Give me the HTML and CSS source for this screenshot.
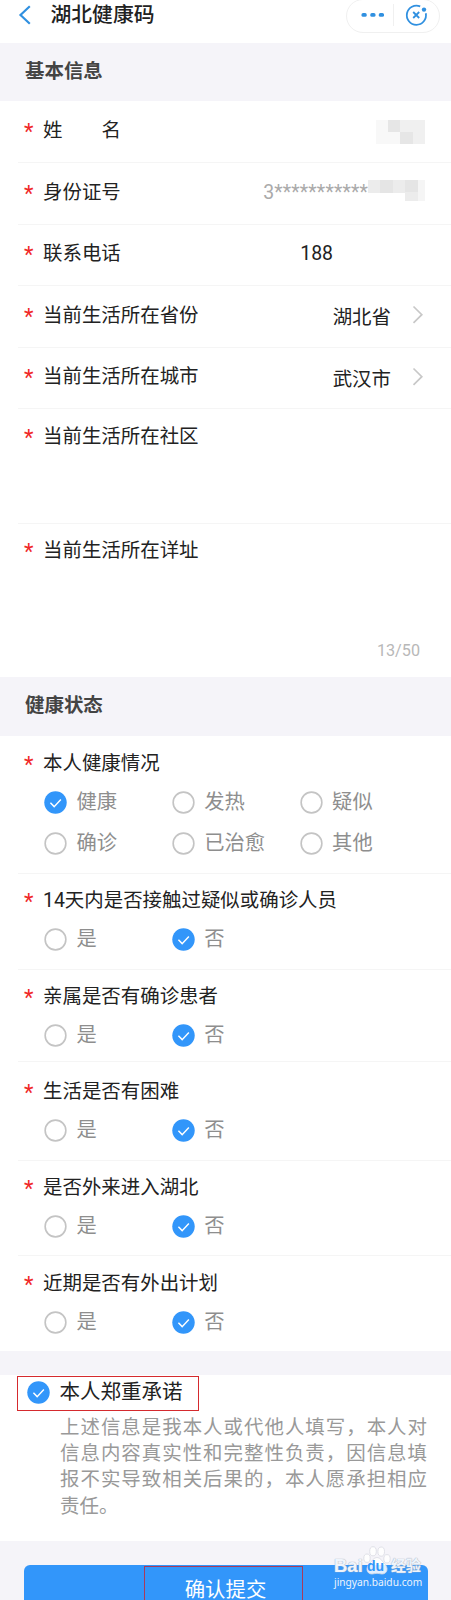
FILE: index.html
```html
<!DOCTYPE html>
<html lang="zh-CN">

<head>
    <meta charset="utf-8">
    <title>湖北健康码</title>
    <link rel="stylesheet" href="styles.css">
</head>

<body>
    <svg class="defs">
        <symbol id="off" viewBox="0 0 24 24">
            <circle cx="12" cy="12" r="10.8" fill="#fff" stroke="#c4c4c4" stroke-width="1.7" />
        </symbol>
        <symbol id="on" viewBox="0 0 24 24">
            <circle cx="12" cy="12" r="11.7" fill="#3296fa" />
            <path d="M6.7 12.3l3.9 4 7-7.4" fill="none" stroke="#fff" stroke-width="1.5" />
        </symbol>
        <symbol id="arrow" viewBox="0 0 12 20">
            <path d="M1.5 1.5l8.3 8.2-8.3 8.2" fill="none" stroke="#c8c8c8" stroke-width="1.7" />
        </symbol>
    </svg>

    <div class="header">
        <svg class="back" width="14" height="22" viewBox="0 0 14 22">
            <path d="M11.8 2.2L2.5 11l9.3 8.8" fill="none" stroke="#3090e0" stroke-width="2.2" />
        </svg>
        <h1>湖北健康码</h1>
        <div class="capsule">
            <svg width="94" height="34" viewBox="0 0 94 34">
                <g fill="#3090e0">
                    <rect x="15.5" y="14" width="5.2" height="3.8" rx="1.6" />
                    <rect x="24.3" y="14" width="5.2" height="3.8" rx="1.6" />
                    <rect x="32.8" y="14" width="5.2" height="3.8" rx="1.6" />
                    <circle cx="78" cy="10.6" r="2.2" />
                </g>
                <path d="M47.5 5v22" stroke="#f0f0f0" />
                <path d="M74.2 7.4A9.6 9.6 0 1 0 79.8 14.3M67.2 13l6 6M73.2 13l-6 6" fill="none" stroke="#3090e0" stroke-width="1.8" />
            </svg>
        </div>
    </div>

    <h2 class="section">基本信息</h2>
    <div class="form">
        <div class="row name">
            <i>*</i><label>姓<span class="space"></span>名</label>
            <div class="mosaic">
                <b class="m1"></b><b class="m3"></b><b class="m2"></b><b class="m2"></b>
                <b class="m1"></b><b class="m1"></b><b class="m3"></b><b class="m2"></b>
            </div>
        </div>
        <div class="row idcard">
            <i>*</i><label>身份证号</label>
            <span class="value gray">3<span class="stars">***********</span></span>
            <svg class="idmask" width="57" height="22" viewBox="0 0 57 22">
                <path d="M0 0h50v21H37v-8H0z" fill="#ececec" />
                <path d="M12 0h13v13H12zM37 0h13v12H37z" fill="#e5e5e5" />
                <path d="M50 0h7v21h-7z" fill="#f5f5f5" />
            </svg>
        </div>
        <div class="row phone">
            <i>*</i><label>联系电话</label>
            <span class="value num">188</span>
        </div>
        <div class="row province">
            <i>*</i><label>当前生活所在省份</label>
            <span class="value">湖北省</span>
            <svg class="arrow"><use href="#arrow" /></svg>
        </div>
        <div class="row city">
            <i>*</i><label>当前生活所在城市</label>
            <span class="value">武汉市</span>
            <svg class="arrow"><use href="#arrow" /></svg>
        </div>
        <div class="row community">
            <i>*</i><label>当前生活所在社区</label>
        </div>
        <div class="row address">
            <i>*</i><label>当前生活所在详址</label>
            <span class="count">13/50</span>
        </div>
    </div>

    <h2 class="section health">健康状态</h2>
    <div class="form">
        <div class="question q1">
            <div class="title"><i>*</i><label>本人健康情况</label></div>
            <div class="options">
                <span><svg><use href="#on" /></svg>健康</span>
                <span><svg><use href="#off" /></svg>发热</span>
                <span><svg><use href="#off" /></svg>疑似</span>
                <span><svg><use href="#off" /></svg>确诊</span>
                <span><svg><use href="#off" /></svg>已治愈</span>
                <span><svg><use href="#off" /></svg>其他</span>
            </div>
        </div>
        <div class="question q2">
            <div class="title"><i>*</i><label>14天内是否接触过疑似或确诊人员</label></div>
            <div class="options">
                <span><svg><use href="#off" /></svg>是</span>
                <span><svg><use href="#on" /></svg>否</span>
            </div>
        </div>
        <div class="question q3">
            <div class="title"><i>*</i><label>亲属是否有确诊患者</label></div>
            <div class="options">
                <span><svg><use href="#off" /></svg>是</span>
                <span><svg><use href="#on" /></svg>否</span>
            </div>
        </div>
        <div class="question q4">
            <div class="title"><i>*</i><label>生活是否有困难</label></div>
            <div class="options">
                <span><svg><use href="#off" /></svg>是</span>
                <span><svg><use href="#on" /></svg>否</span>
            </div>
        </div>
        <div class="question q5">
            <div class="title"><i>*</i><label>是否外来进入湖北</label></div>
            <div class="options">
                <span><svg><use href="#off" /></svg>是</span>
                <span><svg><use href="#on" /></svg>否</span>
            </div>
        </div>
        <div class="question q6">
            <div class="title"><i>*</i><label>近期是否有外出计划</label></div>
            <div class="options">
                <span><svg><use href="#off" /></svg>是</span>
                <span><svg><use href="#on" /></svg>否</span>
            </div>
        </div>
    </div>

    <div class="promise">
        <div class="agree"><svg><use href="#on" /></svg><span>本人郑重承诺</span></div>
        <p>上述信息是我本人或代他人填写，本人对信息内容真实性和完整性负责，因信息填报不实导致相关后果的，本人愿承担相应责任。</p>
    </div>

    <div class="footer">
        <div class="submit"><span>确认提交</span></div>
        <div class="watermark">
            <svg class="paw" width="28" height="30" viewBox="0 0 28 30">
                <g fill="#fff" fill-opacity=".85" stroke="#d9dbe2" stroke-width=".8">
                    <ellipse cx="10" cy="5.3" rx="3.3" ry="4.6" />
                    <ellipse cx="18.2" cy="5.6" rx="3.3" ry="4.6" />
                    <ellipse cx="4" cy="12.2" rx="3.2" ry="4.2" />
                    <ellipse cx="24" cy="12.8" rx="3.2" ry="4.2" />
                    <path d="M14 11.5c3.5 0 4.5 3.2 7 5.5 5 4.6 3.5 11-2 11-2 0-3-.7-5-.7s-3 .7-5 .7c-5.5 0-7-6.4-2-11 2.5-2.3 3.5-5.5 7-5.5z" />
                </g>
            </svg>
            <div class="brand"><span class="bai">Bai</span><span class="du">du</span><span class="jy">经验</span></div>
            <div class="site">jingyan.baidu.com</div>
        </div>
    </div>
</body>

</html>
```
FILE: styles.css
```css
* {
    box-sizing: border-box;
}

body {
    margin: 0;
    width: 451px;
    height: 1600px;
    overflow: hidden;
    background-color: #fff;
    color: #222;
    font-family: Roboto, "Noto Sans CJK SC", sans-serif;
    font-size: 19.45px;
    line-height: 28px;
}

.defs {
    display: none;
}

.header {
    display: flex;
    height: 43px;
    padding-left: 18px;
}

.back {
    margin-top: 4px;
}

h1 {
    margin: 0 0 0 18.5px;
    padding-top: 1px;
    font-size: 20.8px;
    font-weight: 500;
    color: #222;
}

.capsule {
    width: 94px;
    height: 34px;
    margin: -1px 11px 0 auto;
    border: 1px solid #f0f0f0;
    border-radius: 17px;
}

.capsule svg {
    display: block;
    margin: -1px;
}

.section {
    height: 58px;
    margin: 0;
    padding: 15px 0 0 25px;
    background-color: #f5f4f9;
    font-size: 19.45px;
    font-weight: 700;
    color: #444;
}

.health {
    height: 59px;
}

i {
    width: 19px;
    padding-top: 1px;
    font-size: 22px;
    font-style: normal;
    color: #f02828;
}

.row {
    display: flex;
    height: 62px;
    margin-left: 18px;
    padding: 16px 26px 0 6px;
    border-bottom: 1px solid #f5f5f5;
}

.name .space {
    display: inline-block;
    width: 39px;
}

.mosaic {
    display: grid;
    grid-template-columns: repeat(4, 12.3px);
    grid-template-rows: 12px 12px;
    margin: 3px 0 0 auto;
}

.m1 {
    background-color: #f8f8f8;
}

.m2 {
    background-color: #f0f0f0;
}

.m3 {
    background-color: #e6e6e6;
}

.idmask {
    margin-top: 1px;
}

.value {
    margin-left: auto;
}

.gray {
    color: #aaa;
}

.stars {
    letter-spacing: .15px;
}

.phone {
    height: 61px;
    padding-top: 15px;
}

.num {
    margin-right: 92px;
}

.province .value,
.city .value {
    padding-top: 2px;
    margin-right: 21px;
}

.arrow {
    width: 12px;
    height: 20px;
    margin: 3px 1px 0 0;
}

.city {
    height: 61px;
    padding-top: 15px;
}

.city .value {
    padding-top: 3px;
}

.city .arrow {
    margin-top: 4px;
}

.community {
    height: 115px;
    padding-top: 14px;
}

.address {
    height: 153px;
    padding-top: 13px;
    border-bottom: none;
}

.count {
    margin: 100px 5px 0 auto;
    font-size: 16.2px;
    color: #b8b8b8;
}

.question {
    height: 95px;
    margin-left: 18px;
    padding: 13px 0 0 6px;
    border-bottom: 1px solid #f5f5f5;
}

.title {
    display: flex;
}

.options {
    display: grid;
    grid-template-columns: repeat(3, 127.8px);
    grid-auto-rows: 41px;
    margin: 9px 0 0 20px;
    font-size: 20.3px;
    color: #8e8e8e;
}

.options span {
    display: flex;
    height: 28px;
}

.options svg,
.agree svg {
    width: 23px;
    height: 23px;
    margin: 3px 9.5px 0 0;
}

.q1 {
    height: 138px;
    padding-top: 14px;
}

.q1 .options {
    grid-auto-rows: 41.4px;
}

.q2 {
    height: 96px;
}

.q3 {
    height: 92px;
}

.q4 {
    height: 99px;
    padding-top: 16px;
}

.q6 {
    padding-top: 14px;
    border-bottom: none;
}

.promise {
    height: 190px;
    padding: 1px 24px 0 17px;
    border-top: 24px solid #f5f4f9;
}

.agree {
    display: flex;
    width: 182px;
    height: 35px;
    padding-left: 9px;
    border: 1px solid #d52a2e;
    font-size: 20.5px;
}

.agree svg {
    margin-top: 4px;
}

.agree span {
    padding-top: 1px;
}

.promise p {
    width: 367px;
    margin: 4px 0 0 43px;
    line-height: 26.2px;
    text-align: justify;
    color: #999;
}

.footer {
    position: relative;
    height: 59px;
    padding: 24px 23px 0 24px;
    background-color: #f5f4f9;
}

.submit {
    height: 35px;
    padding: 1px 0 0 120px;
    border-radius: 6px 6px 0 0;
    background-color: #3296fa;
}

.submit span {
    display: block;
    width: 159px;
    height: 34px;
    padding: 9px 0 0 4px;
    border: 1px solid #a83a5c;
    border-bottom: none;
    font-size: 20.4px;
    text-align: center;
    color: #fff;
}

/* sits over the button */
.watermark {
    position: absolute;
    left: 334px;
    top: 5px;
    width: 92px;
    color: #eef4fc;
}

.paw {
    position: absolute;
    left: 29px;
    top: 0;
}

.brand {
    position: relative;
    display: flex;
    height: 29px;
    padding-top: 11px;
    font-family: "Liberation Sans", "Noto Sans CJK SC", sans-serif;
    font-size: 18.5px;
    font-weight: bold;
    line-height: 18px;
    text-shadow: 0 0 1px #9fa9b8, 0 0 1px #b9c4d6;
}

.bai {
    width: 30px;
}

.du {
    width: 20px;
    margin-left: 3px;
    font-size: 14px;
    color: #3296fa;
    text-shadow: none;
}

.jy {
    margin-left: 4px;
    font-size: 15px;
    line-height: 17px;
}

.site {
    font-family: "Noto Sans", sans-serif;
    font-size: 10.2px;
    line-height: 14px;
}
```
